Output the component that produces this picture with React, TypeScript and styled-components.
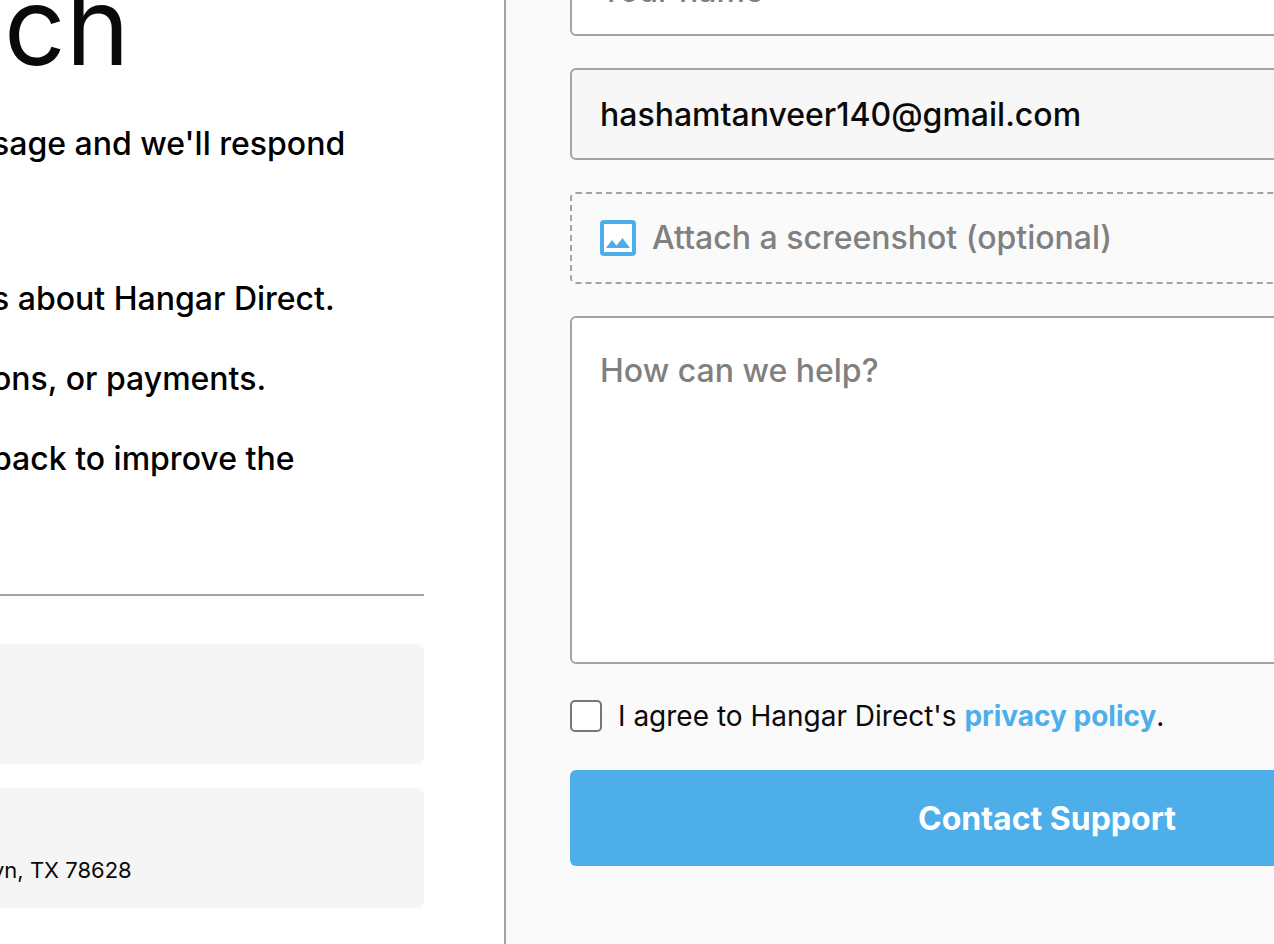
import React from 'react';
import styled, { createGlobalStyle } from 'styled-components';

const GlobalStyle = createGlobalStyle`
  *, *::before, *::after { box-sizing: border-box; }
  body {
    margin: 0;
    background: #ffffff;
    color: #0a0a0a;
    font-family: Inter, "Open Sans", sans-serif;
  }
  h1, p, ul { margin: 0; padding: 0; }
`;

const Page = styled.main`
  display: grid;
  grid-template-columns: 504px minmax(0, 1fr);
  height: 100vh;
  overflow: hidden;
`;

const Info = styled.section`
  padding-right: 80px;
  overflow: hidden;
`;

const Copy = styled.div`
  margin-left: -8px;
  color: #000000;
  font-size: 32px;
  font-weight: 500;
  line-height: 40px;
  white-space: nowrap;
`;

const Title = styled.h1`
  margin-top: -34px;
  padding-left: 12px;
  color: #0a0a0a;
  font-size: 108px;
  font-weight: 400;
  line-height: 120px;
`;

const Lead = styled.p`
  margin-top: 38px;
`;

const Topics = styled.ul`
  display: flex;
  flex-direction: column;
  gap: 40px;
  height: 315px;
  margin-top: 115px;
  list-style: none;
`;

const Cards = styled.div`
  display: flex;
  flex-direction: column;
  gap: 24px;
  padding-top: 48px;
  border-top: 2px solid #a3a3a3;
`;

const Card = styled.address`
  display: flex;
  align-items: flex-end;
  height: 120px;
  padding-bottom: 24px;
  border-radius: 0 6px 6px 0;
  background: #f5f5f5;
  font-size: 22px;
  font-style: normal;
  line-height: 28px;
  text-indent: -8px;
  white-space: nowrap;
  overflow: hidden;
`;

const FormPanel = styled.section`
  border-left: 2px solid #a3a3a3;
  background: #fafafa;
  overflow: hidden;
`;

const Form = styled.form`
  display: flex;
  flex-direction: column;
  gap: 32px;
  margin: -56px -250px 0 64px;
`;

const Input = styled.input`
  width: 100%;
  height: 92px;
  padding: 0 28px;
  border: 2px solid #a3a3a3;
  border-radius: 6px;
  outline: none;
  background: #ffffff;
  color: #0a0a0a;
  font: 500 32px/40px Inter, sans-serif;
  &::placeholder { color: #808080; opacity: 1; }
  &:read-only { background: #f7f7f7; }
`;

const Attach = styled.button`
  display: flex;
  align-items: center;
  gap: 16px;
  height: 92px;
  padding: 0 28px;
  border: 2px dashed #a3a3a3;
  border-radius: 6px;
  background: transparent;
  color: #808080;
  font: 500 32px/42px Inter, sans-serif;
`;

const Message = styled.textarea`
  display: block;
  width: 100%;
  height: 348px;
  padding: 32px 28px;
  border: 2px solid #a3a3a3;
  border-radius: 6px;
  outline: none;
  resize: none;
  background: #ffffff;
  font: 500 32px/42px Inter, sans-serif;
  &::placeholder { color: #808080; opacity: 1; }
`;

const Consent = styled.div`
  display: flex;
  align-items: center;
  gap: 16px;
  height: 42px;
  padding-bottom: 2px;
  font-size: 28px;
  line-height: 38px;
`;

const Checkbox = styled.input`
  appearance: none;
  width: 32px;
  height: 32px;
  margin: 0;
  border: 2px solid #767676;
  border-radius: 5px;
  background: #ffffff;
  &:checked { background: #4daeea; }
`;

const PolicyLink = styled.a`
  color: #4daeea;
  font-weight: 700;
  text-decoration: none;
`;

const Submit = styled.button`
  height: 96px;
  padding: 2px 0 0;
  border: 0;
  border-radius: 6px;
  background: #4daeea;
  color: #ffffff;
  font: 700 32px/40px Inter, sans-serif;
`;

const PictureIcon = () => (
  <svg width="36" height="36" viewBox="0 0 36 36" aria-hidden="true">
    <rect x="2" y="2" width="32" height="32" rx="2" fill="#ffffff" stroke="#4daeea" strokeWidth="4" />
    <path d="M6 28 L12 20 L16.500 25.500 L22.500 18 L30 28 Z" fill="#4daeea" />
  </svg>
);

const topics = ['s about Hangar Direct.', 'ons, or payments.', 'back to improve the'];

export default function App() {
  return (
    <>
      <GlobalStyle />
      <Page>
        <Info>
          <Copy>
            <Title>ch</Title>
            <Lead>sage and we'll respond</Lead>
            <Topics>
              {topics.map((topic) => (
                <li key={topic}>{topic}</li>
              ))}
            </Topics>
          </Copy>
          <Cards>
            <Card />
            <Card>vn, TX 78628</Card>
          </Cards>
        </Info>
        <FormPanel>
          <Form onSubmit={(event) => event.preventDefault()}>
            <Input type="text" placeholder="Your name" aria-label="Your name" />
            <Input type="email" value="hashamtanveer140@gmail.com" readOnly aria-label="Email" />
            <Attach type="button">
              <PictureIcon />
              Attach a screenshot (optional)
            </Attach>
            <Message placeholder="How can we help?" aria-label="How can we help?" />
            <Consent>
              <Checkbox type="checkbox" id="consent" />
              <label htmlFor="consent">
                I agree to Hangar Direct's <PolicyLink href="#privacy">privacy policy</PolicyLink>.
              </label>
            </Consent>
            <Submit type="submit">Contact Support</Submit>
          </Form>
        </FormPanel>
      </Page>
    </>
  );
}
